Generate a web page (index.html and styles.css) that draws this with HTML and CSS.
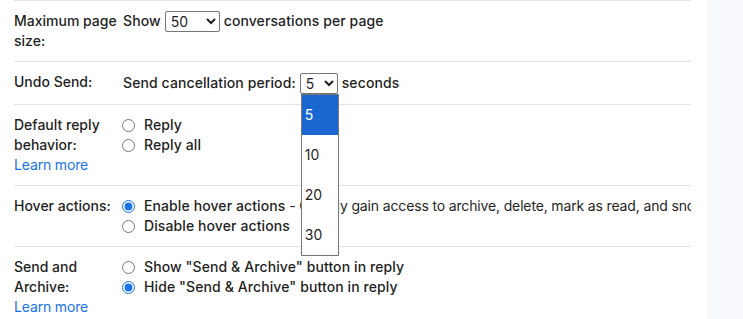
FILE: index.html
```html
<!DOCTYPE html>
<html>
<head>
<meta charset="utf-8">
<link rel="stylesheet" href="styles.css">
</head>
<body>
<div class="page">
  <div class="main">
    <div class="row">
      <div class="label">Maximum page size:</div>
      <div class="value">
        <div class="line">Show <select class="sel sel-wide"><option>50</option></select> conversations per page</div>
      </div>
    </div>
    <div class="row">
      <div class="label">Undo Send:</div>
      <div class="value">
        <div class="line line-tall">Send cancellation period: <span class="sel-wrap"><select class="sel sel-narrow"><option>5</option></select><div class="popup"><div class="opt opt-active">5</div><div class="opt">10</div><div class="opt">20</div><div class="opt">30</div></div></span> seconds</div>
      </div>
    </div>
    <div class="row">
      <div class="label">Default reply behavior:<a class="link" href="#">Learn more</a></div>
      <div class="value">
        <label class="radio"><input type="radio" name="reply"><span>Reply</span></label>
        <label class="radio"><input type="radio" name="reply"><span>Reply all</span></label>
      </div>
    </div>
    <div class="row">
      <div class="label">Hover actions:</div>
      <div class="value">
        <label class="radio"><input type="radio" name="hover" checked><span>Enable hover actions</span><span class="desc">&nbsp;- Quickly gain access to archive, delete, mark as read, and snooze controls on hover.</span></label>
        <label class="radio"><input type="radio" name="hover"><span>Disable hover actions</span></label>
      </div>
    </div>
    <div class="row">
      <div class="label">Send and Archive:<a class="link" href="#">Learn more</a></div>
      <div class="value">
        <label class="radio"><input type="radio" name="sa"><span>Show "Send &amp; Archive" button in reply</span></label>
        <label class="radio"><input type="radio" name="sa" checked><span>Hide "Send &amp; Archive" button in reply</span></label>
      </div>
    </div>
  </div>
  <div class="side"></div>
</div>
</body>
</html>
```
FILE: styles.css
```css
html, body {
  margin: 0;
  padding: 0;
  background: #ffffff;
}
body {
  font-family: Inter, Roboto, "Liberation Sans", sans-serif;
  font-size: 14px;
  line-height: 20px;
  color: #1f1f1f;
  width: 743px;
  height: 319px;
  overflow: hidden;
}
.page {
  display: flex;
  height: 319px;
}
.main {
  width: 691px;
  flex: none;
  padding-left: 14px;
  box-sizing: border-box;
  overflow: hidden;
}
.side {
  margin-left: 16px;
  width: 36px;
  background: #f8f9fd;
}
.row {
  display: flex;
  border-top: 1px solid #e3e3e3;
  padding: 10px 0;
}
.label {
  width: 109px;
  flex: none;
  padding-right: 2px;
  box-sizing: border-box;
  font-weight: 500;
}
.link {
  display: block;
  color: #1a73e8;
  font-weight: 400;
  letter-spacing: -0.15px;
  text-decoration: none;
}
.value {
  flex: 1;
  min-width: 0;
  font-weight: 500;
  letter-spacing: 0.1px;
  white-space: nowrap;
}
.line {
  display: flex;
  align-items: center;
  gap: 4px;
  height: 20px;
}
.line-tall {
  height: 22px;
}
.sel {
  font-family: Inter, Roboto, "Liberation Sans", sans-serif;
  font-size: 14px;
  font-weight: 400;
  letter-spacing: 0;
  color: #1f1f1f;
  height: 21px;
  border: 1px solid #767676;
  border-radius: 2px;
  background: #fff;
  padding: 0 0 0 1px;
  margin: 0;
  box-sizing: border-box;
}
.sel-wide {
  width: 55px;
}
.sel-narrow {
  width: 38px;
}
.sel-wrap {
  position: relative;
  display: inline-flex;
}
.popup {
  position: absolute;
  top: 100%;
  left: 1px;
  width: 38px;
  box-sizing: border-box;
  border: 1px solid #767676;
  background: #fff;
  z-index: 5;
  font-weight: 400;
  letter-spacing: 0;
}
.opt {
  height: 40px;
  line-height: 40px;
  padding-left: 3px;
  color: #1f1f1f;
}
.opt-active {
  background: #1a67d2;
  color: #fff;
}
.radio {
  display: flex;
  align-items: center;
  height: 20px;
}
.radio input {
  width: 13px;
  height: 13px;
  margin: 0 9px 0 -1px;
  flex: none;
  accent-color: #1a73e8;
}
.desc {
  font-weight: 400;
  letter-spacing: -0.15px;
}
```
